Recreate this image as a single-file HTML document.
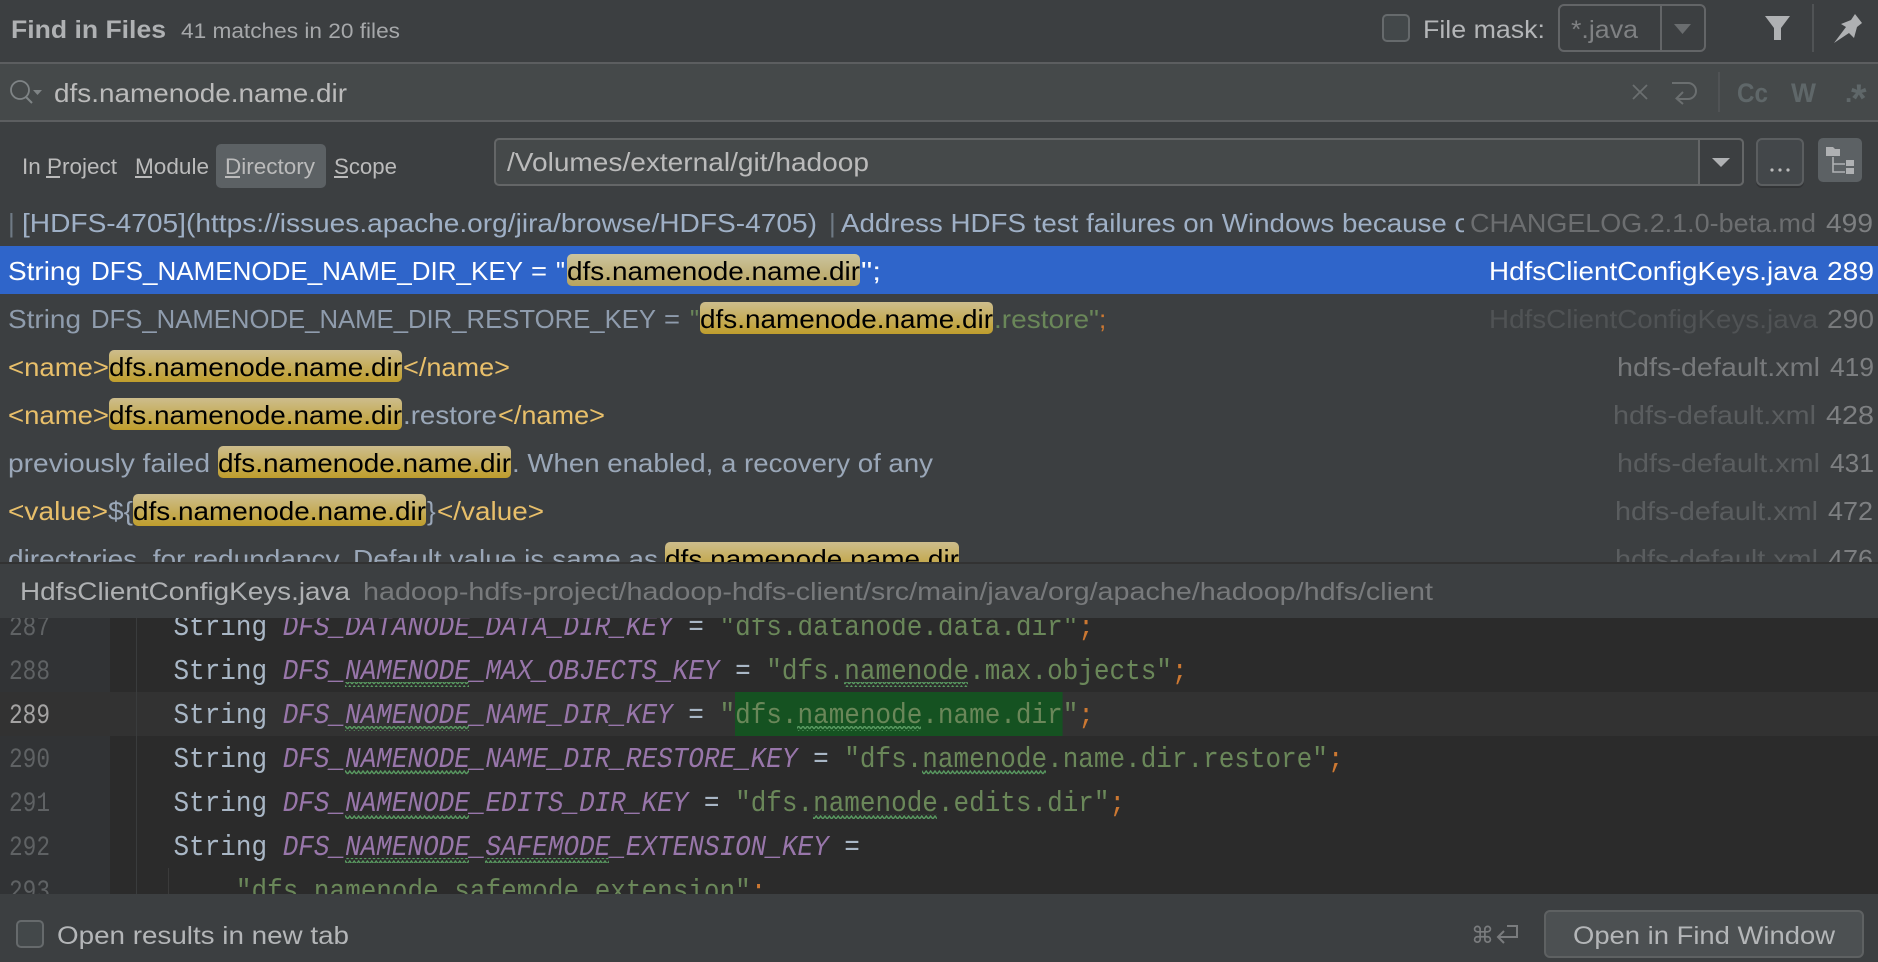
<!DOCTYPE html>
<html><head><meta charset="utf-8"><title>Find in Files</title>
<style>
html,body{margin:0;padding:0;background:#3c3f41;overflow:hidden}
svg{display:block}
text{font-family:"Liberation Sans",sans-serif;white-space:pre}
.m text,text.m{font-family:"Liberation Mono",monospace;font-size:29px}
.r text{font-size:26px}
.s{fill:#a9b7c6}.c{fill:#9876aa;font-style:italic}.g{fill:#6a8759}.o{fill:#cc7832}
text.n{font-family:"Liberation Mono",monospace;font-size:28px;fill:#5f6264}
</style></head><body>
<svg width="1878" height="962" viewBox="0 0 1878 962" xmlns="http://www.w3.org/2000/svg">
<defs>
<linearGradient id="mg" x1="0" y1="0" x2="0" y2="1"><stop offset="0" stop-color="#cdbd8c"/><stop offset="1" stop-color="#bf9e2c"/></linearGradient>
<linearGradient id="ms" x1="0" y1="0" x2="0" y2="1"><stop offset="0" stop-color="#cbc49e"/><stop offset="1" stop-color="#b8a45e"/></linearGradient>
<pattern id="w" width="4.4" height="5" patternUnits="userSpaceOnUse"><path d="M0 4 L2.2 1 L4.4 4" fill="none" stroke="#5a9c62" stroke-width="1.4"/></pattern>
<clipPath id="cl"><rect x="0" y="198" width="1878" height="364"/></clipPath>
<clipPath id="ce"><rect x="0" y="618" width="1878" height="276"/></clipPath>
<clipPath id="c1"><rect x="0" y="198" width="1464" height="48"/></clipPath>
</defs>

<rect width="1878" height="962" fill="#3c3f41"/>

<!-- header -->
<text x="11" y="38" font-size="25" font-weight="700" fill="#afb1b3" textLength="155" lengthAdjust="spacingAndGlyphs">Find in Files</text>
<text x="181" y="38" font-size="21" fill="#a6a8aa" textLength="219" lengthAdjust="spacingAndGlyphs">41 matches in 20 files</text>
<rect x="1383" y="15" width="26" height="26" rx="4" fill="#43484a" stroke="#666a6c" stroke-width="2"/>
<text x="1423" y="38" font-size="25" fill="#b4b6b8" textLength="122" lengthAdjust="spacingAndGlyphs">File mask:</text>
<rect x="1559" y="5" width="146" height="46" rx="5" fill="#3c3f41" stroke="#636567" stroke-width="2"/>
<rect x="1660" y="5" width="2" height="46" fill="#636567"/>
<text x="1571" y="38" font-size="25" fill="#7f8183" textLength="67" lengthAdjust="spacingAndGlyphs">*.java</text>
<polygon points="1674,24 1691,24 1682.5,34" fill="#6a6d6f"/>
<polygon points="1765,16 1790,16 1781,28 1781,40 1774,40 1774,28" fill="#afb1b3"/>
<rect x="1812" y="4" width="2" height="48" fill="#505355"/>
<path d="M1834 43 L1846 27 L1841 24 L1851 20 L1855 14 L1862 23 L1857 27 L1854 38 L1849 33 Z" fill="#afb1b3"/>

<!-- search row -->
<rect x="0" y="62" width="1878" height="59" fill="#45494a"/>
<rect x="0" y="62" width="1878" height="2" fill="#5c5e60"/>
<rect x="0" y="120" width="1878" height="2" fill="#5c5e60"/>
<circle cx="20" cy="90" r="9" fill="none" stroke="#7f8486" stroke-width="1.8"/>
<line x1="26" y1="97" x2="32" y2="103" stroke="#7f8486" stroke-width="2"/>
<polygon points="33,90 42,90 37.5,95" fill="#7f8486"/>
<text x="54" y="102" font-size="26" fill="#bbbbbb" textLength="293" lengthAdjust="spacingAndGlyphs">dfs.namenode.name.dir</text>
<path d="M1633 85 L1647 99 M1647 85 L1633 99" stroke="#6b6f70" stroke-width="1.8" fill="none"/>
<path d="M1672 83 H1688 A8 8 0 0 1 1688 99 H1677 M1683 92 L1676.5 98.5 L1683 104" stroke="#6b6f70" stroke-width="2" fill="none"/>
<rect x="1718" y="72" width="2" height="40" fill="#505355"/>
<text x="1737" y="102" font-size="27" font-weight="700" fill="#5f6769" textLength="31" lengthAdjust="spacingAndGlyphs">Cc</text>
<text x="1791" y="102" font-size="27" font-weight="700" fill="#5f6769" textLength="25" lengthAdjust="spacingAndGlyphs">W</text>
<text x="1845" y="102" font-size="26" font-weight="700" fill="#5f6769">.</text>
<text x="1851" y="112" font-size="40" font-weight="700" fill="#5f6769">*</text>

<!-- scope row -->
<rect x="216" y="144" width="110" height="44" rx="5" fill="#5c6164"/>
<text x="22" y="174" font-size="22" fill="#bbbbbb" textLength="95" lengthAdjust="spacingAndGlyphs">In Project</text>
<rect x="46" y="176" width="14" height="2" fill="#bbbbbb"/>
<text x="135" y="174" font-size="22" fill="#bbbbbb" textLength="74" lengthAdjust="spacingAndGlyphs">Module</text>
<rect x="135" y="176" width="17" height="2" fill="#bbbbbb"/>
<text x="225" y="174" font-size="22" fill="#bbbbbb" textLength="90" lengthAdjust="spacingAndGlyphs">Directory</text>
<rect x="225" y="176" width="15" height="2" fill="#bbbbbb"/>
<text x="334" y="174" font-size="22" fill="#bbbbbb" textLength="63" lengthAdjust="spacingAndGlyphs">Scope</text>
<rect x="334" y="176" width="14" height="2" fill="#bbbbbb"/>

<rect x="495" y="139" width="1248" height="46" rx="4" fill="#45494a" stroke="#646667" stroke-width="2"/>
<path d="M1699 139 H1739 A4 4 0 0 1 1743 143 V181 A4 4 0 0 1 1739 185 H1699 Z" fill="#3c3f41" stroke="#646667" stroke-width="2"/>
<polygon points="1712,158 1730,158 1721,167" fill="#afb1b3"/>
<text x="507" y="171" font-size="26" fill="#bbbbbb" textLength="362" lengthAdjust="spacingAndGlyphs">/Volumes/external/git/hadoop</text>
<rect x="1756" y="141" width="48" height="47" rx="6" fill="#323436"/>
<rect x="1757" y="139" width="46" height="46" rx="5" fill="#43474a" stroke="#5b5e60" stroke-width="2"/>
<circle cx="1772" cy="170" r="1.6" fill="#bbbbbb"/><circle cx="1780" cy="170" r="1.6" fill="#bbbbbb"/><circle cx="1788" cy="170" r="1.6" fill="#bbbbbb"/>
<rect x="1818" y="138" width="44" height="44" rx="5" fill="#5c6164"/>
<path d="M1826 147 H1833 L1835 149 H1840 V156 H1826 Z" fill="#afb1b3"/>
<path d="M1833 157 V172 H1845 M1833 164 H1845" stroke="#afb1b3" stroke-width="1.6" fill="none"/>
<rect x="1846" y="160" width="8" height="6" fill="#afb1b3"/><rect x="1846" y="168" width="8" height="6" fill="#afb1b3"/>

<!-- results -->
<g class="r" clip-path="url(#cl)">
<rect x="0" y="246" width="1878" height="48" fill="#2f65ca"/>

<g clip-path="url(#c1)">
<text x="8" y="232" fill="#6f7a85">|</text>
<text x="22" y="232" fill="#9fb0c6" textLength="795" lengthAdjust="spacingAndGlyphs">[HDFS-4705](https://issues.apache.org/jira/browse/HDFS-4705)</text>
<text x="829" y="232" fill="#6f7a85">|</text>
<text x="841" y="232" fill="#9fb0c6" textLength="629" lengthAdjust="spacingAndGlyphs">Address HDFS test failures on Windows because o</text>
</g>
<text x="1470" y="232" fill="#6c6e70" textLength="346" lengthAdjust="spacingAndGlyphs">CHANGELOG.2.1.0-beta.md</text>
<text x="1826" y="232" fill="#7d7f81" textLength="47" lengthAdjust="spacingAndGlyphs">499</text>

<text x="8" y="280" fill="#ffffff" textLength="73" lengthAdjust="spacingAndGlyphs">String</text>
<text x="91" y="280" fill="#ffffff" textLength="432" lengthAdjust="spacingAndGlyphs">DFS_NAMENODE_NAME_DIR_KEY</text>
<text x="531" y="280" fill="#ffffff" textLength="16" lengthAdjust="spacingAndGlyphs">=</text>
<text x="556" y="280" fill="#ffffff" textLength="9" lengthAdjust="spacingAndGlyphs">"</text>
<rect x="567" y="254" width="293" height="32" rx="5" fill="url(#ms)"/>
<text x="567" y="280" fill="#000000" textLength="293" lengthAdjust="spacingAndGlyphs">dfs.namenode.name.dir</text>
<text x="861" y="280" fill="#ffffff" textLength="20" lengthAdjust="spacingAndGlyphs">";</text>
<text x="1489" y="280" fill="#ffffff" textLength="329" lengthAdjust="spacingAndGlyphs">HdfsClientConfigKeys.java</text>
<text x="1827" y="280" fill="#ffffff" textLength="47" lengthAdjust="spacingAndGlyphs">289</text>

<text x="8" y="328" fill="#8f9cad" textLength="73" lengthAdjust="spacingAndGlyphs">String</text>
<text x="91" y="328" fill="#8f9cad" textLength="565" lengthAdjust="spacingAndGlyphs">DFS_NAMENODE_NAME_DIR_RESTORE_KEY</text>
<text x="664" y="328" fill="#8f9cad" textLength="16" lengthAdjust="spacingAndGlyphs">=</text>
<text x="690" y="328" fill="#6a8759" textLength="9" lengthAdjust="spacingAndGlyphs">"</text>
<rect x="700" y="302" width="293" height="32" rx="5" fill="url(#mg)"/>
<text x="700" y="328" fill="#000000" textLength="293" lengthAdjust="spacingAndGlyphs">dfs.namenode.name.dir</text>
<text x="994" y="328" fill="#6a8759" textLength="105" lengthAdjust="spacingAndGlyphs">.restore"</text>
<text x="1099" y="328" fill="#cc7832">;</text>
<text x="1489" y="328" fill="#505355" textLength="329" lengthAdjust="spacingAndGlyphs">HdfsClientConfigKeys.java</text>
<text x="1827" y="328" fill="#77797b" textLength="47" lengthAdjust="spacingAndGlyphs">290</text>

<text x="8" y="376" fill="#e8bf6a" textLength="101" lengthAdjust="spacingAndGlyphs">&lt;name&gt;</text>
<rect x="109" y="350" width="293" height="32" rx="5" fill="url(#mg)"/>
<text x="109" y="376" fill="#000000" textLength="293" lengthAdjust="spacingAndGlyphs">dfs.namenode.name.dir</text>
<text x="403" y="376" fill="#e8bf6a" textLength="107" lengthAdjust="spacingAndGlyphs">&lt;/name&gt;</text>
<text x="1617" y="376" fill="#77797b" textLength="203" lengthAdjust="spacingAndGlyphs">hdfs-default.xml</text>
<text x="1830" y="376" fill="#7d7f81" textLength="44" lengthAdjust="spacingAndGlyphs">419</text>

<text x="8" y="424" fill="#e8bf6a" textLength="101" lengthAdjust="spacingAndGlyphs">&lt;name&gt;</text>
<rect x="109" y="398" width="293" height="32" rx="5" fill="url(#mg)"/>
<text x="109" y="424" fill="#000000" textLength="293" lengthAdjust="spacingAndGlyphs">dfs.namenode.name.dir</text>
<text x="403" y="424" fill="#9aa7b8" textLength="94" lengthAdjust="spacingAndGlyphs">.restore</text>
<text x="498" y="424" fill="#e8bf6a" textLength="107" lengthAdjust="spacingAndGlyphs">&lt;/name&gt;</text>
<text x="1613" y="424" fill="#5a5d5f" textLength="203" lengthAdjust="spacingAndGlyphs">hdfs-default.xml</text>
<text x="1826" y="424" fill="#7d7f81" textLength="48" lengthAdjust="spacingAndGlyphs">428</text>

<text x="8" y="472" fill="#9aa7b8" textLength="202" lengthAdjust="spacingAndGlyphs">previously failed</text>
<rect x="218" y="446" width="293" height="32" rx="5" fill="url(#mg)"/>
<text x="218" y="472" fill="#000000" textLength="293" lengthAdjust="spacingAndGlyphs">dfs.namenode.name.dir</text>
<text x="512" y="472" fill="#9aa7b8" textLength="421" lengthAdjust="spacingAndGlyphs">. When enabled, a recovery of any</text>
<text x="1617" y="472" fill="#5a5d5f" textLength="203" lengthAdjust="spacingAndGlyphs">hdfs-default.xml</text>
<text x="1830" y="472" fill="#7d7f81" textLength="44" lengthAdjust="spacingAndGlyphs">431</text>

<text x="8" y="520" fill="#e8bf6a" textLength="100" lengthAdjust="spacingAndGlyphs">&lt;value&gt;</text>
<text x="108" y="520" fill="#9aa7b8" textLength="25" lengthAdjust="spacingAndGlyphs">${</text>
<rect x="133" y="494" width="293" height="32" rx="5" fill="url(#mg)"/>
<text x="133" y="520" fill="#000000" textLength="293" lengthAdjust="spacingAndGlyphs">dfs.namenode.name.dir</text>
<text x="427" y="520" fill="#9aa7b8">}</text>
<text x="437" y="520" fill="#e8bf6a" textLength="107" lengthAdjust="spacingAndGlyphs">&lt;/value&gt;</text>
<text x="1615" y="520" fill="#5a5d5f" textLength="203" lengthAdjust="spacingAndGlyphs">hdfs-default.xml</text>
<text x="1828" y="520" fill="#7d7f81" textLength="45" lengthAdjust="spacingAndGlyphs">472</text>

<text x="8" y="568" fill="#9aa7b8" textLength="650" lengthAdjust="spacingAndGlyphs">directories, for redundancy. Default value is same as</text>
<rect x="665" y="542" width="294" height="32" rx="5" fill="url(#mg)"/>
<text x="665" y="568" fill="#000000" textLength="294" lengthAdjust="spacingAndGlyphs">dfs.namenode.name.dir</text>
<text x="1615" y="568" fill="#5a5d5f" textLength="203" lengthAdjust="spacingAndGlyphs">hdfs-default.xml</text>
<text x="1828" y="568" fill="#7d7f81" textLength="45" lengthAdjust="spacingAndGlyphs">476</text>
</g>

<!-- preview header -->
<rect x="0" y="562" width="1878" height="2" fill="#323232"/>
<text x="20" y="600" font-size="25" fill="#afb1b3" textLength="330" lengthAdjust="spacingAndGlyphs">HdfsClientConfigKeys.java</text>
<text x="363" y="600" font-size="25" fill="#787a7c" textLength="1070" lengthAdjust="spacingAndGlyphs">hadoop-hdfs-project/hadoop-hdfs-client/src/main/java/org/apache/hadoop/hdfs/client</text>

<!-- editor -->
<g clip-path="url(#ce)">
<rect x="0" y="618" width="1878" height="276" fill="#2b2b2b"/>
<rect x="0" y="618" width="110" height="276" fill="#313335"/>
<rect x="0" y="692" width="1878" height="44" fill="#323232"/>
<rect x="136" y="618" width="1" height="276" fill="#3a3c3d"/>
<rect x="168" y="868" width="1" height="26" fill="#3b3b3b"/>
<rect x="735" y="692" width="327.6" height="44" fill="#155221"/>

<text class="n" x="9" y="635" textLength="41" lengthAdjust="spacingAndGlyphs">287</text>
<text class="n" x="9" y="679" textLength="41" lengthAdjust="spacingAndGlyphs">288</text>
<text class="n" x="9" y="723" textLength="41" lengthAdjust="spacingAndGlyphs" style="fill:#a4a3a3">289</text>
<text class="n" x="9" y="767" textLength="41" lengthAdjust="spacingAndGlyphs">290</text>
<text class="n" x="9" y="811" textLength="41" lengthAdjust="spacingAndGlyphs">291</text>
<text class="n" x="9" y="855" textLength="41" lengthAdjust="spacingAndGlyphs">292</text>
<text class="n" x="9" y="899" textLength="41" lengthAdjust="spacingAndGlyphs">293</text>

<g class="m">
<text class="s" x="173.5" y="635" textLength="93.6" lengthAdjust="spacingAndGlyphs">String</text>
<text class="c" x="282.7" y="635" textLength="390" lengthAdjust="spacingAndGlyphs">DFS_DATANODE_DATA_DIR_KEY</text>
<text class="s" x="688.3" y="635" textLength="15.6" lengthAdjust="spacingAndGlyphs">=</text>
<text class="g" x="719.5" y="635" textLength="358.8" lengthAdjust="spacingAndGlyphs">"dfs.datanode.data.dir"</text>
<text class="o" x="1078.3" y="635" textLength="15.6" lengthAdjust="spacingAndGlyphs">;</text>

<text class="s" x="173.5" y="679" textLength="93.6" lengthAdjust="spacingAndGlyphs">String</text>
<text class="c" x="282.7" y="679" textLength="436.8" lengthAdjust="spacingAndGlyphs">DFS_NAMENODE_MAX_OBJECTS_KEY</text>
<text class="s" x="735.1" y="679" textLength="15.6" lengthAdjust="spacingAndGlyphs">=</text>
<text class="g" x="766.3" y="679" textLength="405.6" lengthAdjust="spacingAndGlyphs">"dfs.namenode.max.objects"</text>
<text class="o" x="1171.9" y="679" textLength="15.6" lengthAdjust="spacingAndGlyphs">;</text>

<text class="s" x="173.5" y="723" textLength="93.6" lengthAdjust="spacingAndGlyphs">String</text>
<text class="c" x="282.7" y="723" textLength="390" lengthAdjust="spacingAndGlyphs">DFS_NAMENODE_NAME_DIR_KEY</text>
<text class="s" x="688.3" y="723" textLength="15.6" lengthAdjust="spacingAndGlyphs">=</text>
<text class="g" x="719.5" y="723" textLength="358.8" lengthAdjust="spacingAndGlyphs">"dfs.namenode.name.dir"</text>
<text class="o" x="1078.3" y="723" textLength="15.6" lengthAdjust="spacingAndGlyphs">;</text>

<text class="s" x="173.5" y="767" textLength="93.6" lengthAdjust="spacingAndGlyphs">String</text>
<text class="c" x="282.7" y="767" textLength="514.8" lengthAdjust="spacingAndGlyphs">DFS_NAMENODE_NAME_DIR_RESTORE_KEY</text>
<text class="s" x="813.1" y="767" textLength="15.6" lengthAdjust="spacingAndGlyphs">=</text>
<text class="g" x="844.3" y="767" textLength="483.6" lengthAdjust="spacingAndGlyphs">"dfs.namenode.name.dir.restore"</text>
<text class="o" x="1327.9" y="767" textLength="15.6" lengthAdjust="spacingAndGlyphs">;</text>

<text class="s" x="173.5" y="811" textLength="93.6" lengthAdjust="spacingAndGlyphs">String</text>
<text class="c" x="282.7" y="811" textLength="405.6" lengthAdjust="spacingAndGlyphs">DFS_NAMENODE_EDITS_DIR_KEY</text>
<text class="s" x="703.9" y="811" textLength="15.6" lengthAdjust="spacingAndGlyphs">=</text>
<text class="g" x="735.1" y="811" textLength="374.4" lengthAdjust="spacingAndGlyphs">"dfs.namenode.edits.dir"</text>
<text class="o" x="1109.5" y="811" textLength="15.6" lengthAdjust="spacingAndGlyphs">;</text>

<text class="s" x="173.5" y="855" textLength="93.6" lengthAdjust="spacingAndGlyphs">String</text>
<text class="c" x="282.7" y="855" textLength="546" lengthAdjust="spacingAndGlyphs">DFS_NAMENODE_SAFEMODE_EXTENSION_KEY</text>
<text class="s" x="844.3" y="855" textLength="15.6" lengthAdjust="spacingAndGlyphs">=</text>

<text class="g" x="235.9" y="899" textLength="514.8" lengthAdjust="spacingAndGlyphs">"dfs.namenode.safemode.extension"</text>
<text class="o" x="750.7" y="899" textLength="15.6" lengthAdjust="spacingAndGlyphs">;</text>
</g>

<!-- squiggles -->
<rect x="345" y="682" width="124" height="5" fill="url(#w)"/>
<rect x="844" y="682" width="124" height="5" fill="url(#w)"/>
<rect x="345" y="726" width="124" height="5" fill="url(#w)"/>
<rect x="797" y="726" width="124" height="5" fill="url(#w)"/>
<rect x="345" y="770" width="124" height="5" fill="url(#w)"/>
<rect x="922" y="770" width="124" height="5" fill="url(#w)"/>
<rect x="345" y="814" width="124" height="5" fill="url(#w)"/>
<rect x="813" y="814" width="124" height="5" fill="url(#w)"/>
<rect x="345" y="858" width="124" height="5" fill="url(#w)"/>
<rect x="485" y="858" width="124" height="5" fill="url(#w)"/>
</g>

<!-- footer -->
<rect x="0" y="894" width="1878" height="68" fill="#3c3f41"/>
<rect x="17" y="921" width="26" height="26" rx="4" fill="#43484a" stroke="#666a6c" stroke-width="2"/>
<text x="57" y="944" font-size="25" fill="#b4b6b8" textLength="292" lengthAdjust="spacingAndGlyphs">Open results in new tab</text>
<text x="1471" y="943" style="font-family:'DejaVu Sans',sans-serif" font-size="23" fill="#7a7c7e">⌘</text>
<path d="M1507 926 H1517 V937 H1498 M1504 931 L1498 937 L1504 943" stroke="#7a7c7e" stroke-width="2" fill="none"/>
<rect x="1545" y="911" width="318" height="46" rx="5" fill="#4c5052" stroke="#5e6162" stroke-width="2"/>
<text x="1573" y="944" font-size="25" fill="#b4b6b8" textLength="262" lengthAdjust="spacingAndGlyphs">Open in Find Window</text>
</svg>
</body></html>
